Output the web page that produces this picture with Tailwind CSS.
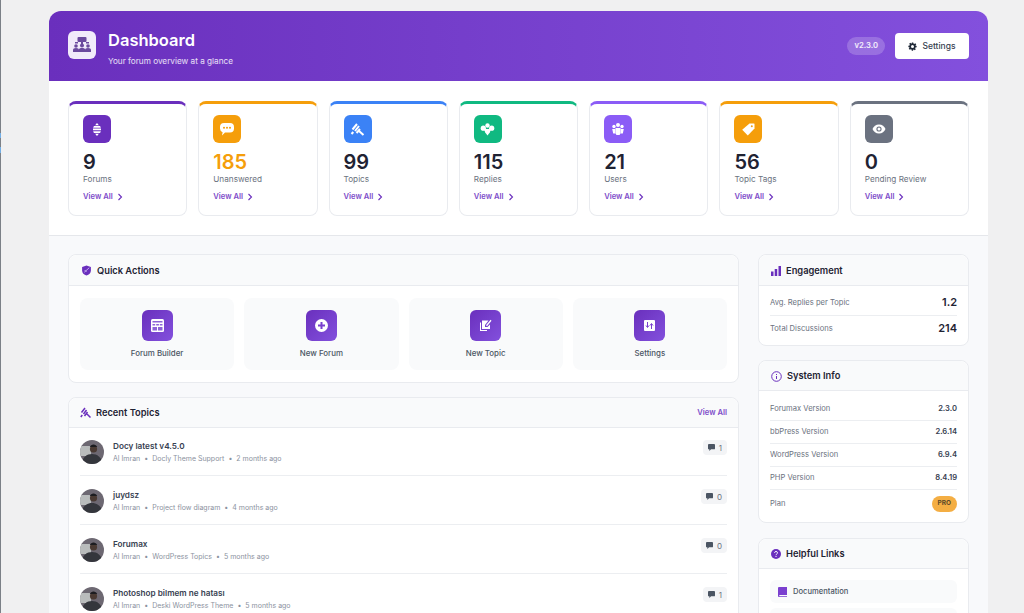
<!DOCTYPE html>
<html lang="en">
<head>
    <meta charset="UTF-8">
    <meta name="viewport" content="width=device-width, initial-scale=1.0">
    <title>Forumax Dashboard</title>
    <script src="https://cdn.jsdelivr.net/npm/@tailwindcss/browser@4"></script>
</head>
<body class="h-[613px] overflow-hidden bg-[#f0f0f1] font-['Inter',sans-serif] text-[#1f2937]">
    <div class="flex h-[613px]">
        <!-- admin menu edge -->
        <div class="w-px shrink-0 bg-[#7b8087] pt-[133px]">
            <div class="h-[5px] bg-[#72aee6]"></div>
            <div class="mt-[9px] h-[6px] bg-[#72aee6]"></div>
        </div>
        <div class="ml-[48px] mt-[11px] w-[939px] shrink-0 overflow-hidden rounded-t-xl bg-[#f8f9fb]">

            <!-- Header -->
            <header class="flex h-[70px] items-start justify-between bg-gradient-to-r from-[#6a2fbd] to-[#8350dd] px-[19px] pt-[20px]">
                <div class="flex items-start gap-[12px]">
                    <div class="flex h-[28px] w-[28px] items-center justify-center rounded-md bg-[#f1ebfa]">
                        <svg class="h-[20px] w-[20px]" viewBox="0 0 20 20" fill="#6b4a9e">
                            <rect x="5.500" y="2" width="9" height="5" rx="1"/>
                            <path d="M3 7h3v1.500H3zM14 7h3v1.500h-3zM9 7h2v2H9z"/>
                            <circle cx="4" cy="11" r="1.800"/><circle cx="10" cy="10.500" r="2"/><circle cx="16" cy="11" r="1.800"/>
                            <path d="M1 17v-2c0-1.200 1-2 3-2s3 .8 3 2v2zM7 17v-2.500c0-1 1-1.500 3-1.500s3 .5 3 1.500V17zM13 17v-2c0-1.200 1-2 3-2s3 .8 3 2v2z"/>
                        </svg>
                    </div>
                    <div>
                        <h1 class="text-[16.500px] leading-[18px] font-semibold text-white">Dashboard</h1>
                        <p class="mt-[6px] text-[8.200px] leading-[12px] text-white/85">Your forum overview at a glance</p>
                    </div>
                </div>
                <div class="mt-[2px] flex items-center gap-[10px]">
                    <span class="flex h-[18px] items-center rounded-full bg-white/20 px-[7px] text-[7.700px] font-semibold text-white/90">v2.3.0</span>
                    <a class="flex h-[26px] w-[74px] items-center justify-center gap-[5px] rounded-[4px] bg-white text-[8.500px] font-medium text-[#374151]">
                        <svg class="h-[9px] w-[9px]" viewBox="0 0 24 24" fill="#1f2937"><path fill-rule="evenodd" d="M10 1h4l.6 3.200 1.900.8 2.700-1.800 2.800 2.800-1.800 2.700.8 1.900L23 10v4l-3.200.6-.8 1.900 1.800 2.700-2.800 2.800-2.700-1.800-1.900.8L14 23h-4l-.6-3.200-1.900-.8-2.700 1.800-2.800-2.800 1.800-2.700-.8-1.900L1 14v-4l3.200-.6.8-1.900-1.800-2.700 2.800-2.800 2.700 1.800 1.900-.8zM12 8a4 4 0 100 8 4 4 0 000-8z"/></svg>
                        Settings
                    </a>
                </div>
            </header>

            <!-- Stat cards -->
            <section class="grid h-[155px] grid-cols-7 gap-[11px] border-b border-[#e5e7eb] bg-white px-[19px] pt-[20px]">
                <div class="h-[115px] rounded-lg border border-t-[3px] border-[#e9ebef] border-t-[#6a2fbd] bg-white px-[14px] pt-[11px]">
                    <div class="flex h-[28px] w-[28px] items-center justify-center rounded-md bg-[#6a2fbd]">
                        <svg class="h-[13px] w-[10px]" viewBox="0 0 12 12" preserveAspectRatio="none" fill="#fff"><path d="M6 0l2.300 2H3.700zM2.300 2.700h7.400L10.600 4.400H1.400zM1.200 5.100h9.600v1.700H1.200zM1.400 7.500h9.200L9.700 9.200H2.300zM3.700 9.900h4.600L6 12z"/></svg>
                    </div>
                    <div class="mt-[8px] text-[20px] leading-[23px] font-semibold text-[#1f2333]">9</div>
                    <div class="text-[8.200px] leading-[11px] text-[#6b7280]">Forums</div>
                    <a class="mt-[6px] flex items-center gap-[4px] text-[7.600px] leading-[11px] font-semibold text-[#7c4bc9]">View All
                        <svg class="h-[8px] w-[6px]" viewBox="0 0 6 8" fill="none" stroke="#6a2fbd" stroke-width="1.100"><path d="M1.500 1l3 3-3 3"/></svg></a>
                </div>
                <div class="h-[115px] rounded-lg border border-t-[3px] border-[#e9ebef] border-t-[#f59e0b] bg-white px-[14px] pt-[11px]">
                    <div class="flex h-[28px] w-[28px] items-center justify-center rounded-md bg-[#f59e0b]">
                        <svg class="h-[16px] w-[16px]" viewBox="0 0 16 16"><path fill="#fff" d="M5 2h6a4 4 0 014 4v1.500a4 4 0 01-4 4H6L3 14.500l.6-3.300A4 4 0 011 7.500V6a4 4 0 014-4z"/><circle cx="5" cy="6.800" r="1" fill="#f59e0b"/><circle cx="8" cy="6.800" r="1" fill="#f59e0b"/><circle cx="11" cy="6.800" r="1" fill="#f59e0b"/></svg>
                    </div>
                    <div class="mt-[8px] text-[20px] leading-[23px] font-semibold text-[#f59e0b]">185</div>
                    <div class="text-[8.200px] leading-[11px] text-[#6b7280]">Unanswered</div>
                    <a class="mt-[6px] flex items-center gap-[4px] text-[7.600px] leading-[11px] font-semibold text-[#7c4bc9]">View All
                        <svg class="h-[8px] w-[6px]" viewBox="0 0 6 8" fill="none" stroke="#6a2fbd" stroke-width="1.100"><path d="M1.500 1l3 3-3 3"/></svg></a>
                </div>
                <div class="h-[115px] rounded-lg border border-t-[3px] border-[#e9ebef] border-t-[#3b82f6] bg-white px-[14px] pt-[11px]">
                    <div class="flex h-[28px] w-[28px] items-center justify-center rounded-md bg-[#3b82f6]">
                        <svg class="h-[15px] w-[15px]" viewBox="0 0 15 15" fill="none" stroke="#fff" stroke-width="2"><path d="M2.500 7.500l4.500-5.500M5 9l4-5M1.500 12l1.800-2M6.500 11l3.500-4M9 9l4.500 4"/></svg>
                    </div>
                    <div class="mt-[8px] text-[20px] leading-[23px] font-semibold text-[#1f2333]">99</div>
                    <div class="text-[8.200px] leading-[11px] text-[#6b7280]">Topics</div>
                    <a class="mt-[6px] flex items-center gap-[4px] text-[7.600px] leading-[11px] font-semibold text-[#7c4bc9]">View All
                        <svg class="h-[8px] w-[6px]" viewBox="0 0 6 8" fill="none" stroke="#6a2fbd" stroke-width="1.100"><path d="M1.500 1l3 3-3 3"/></svg></a>
                </div>
                <div class="h-[115px] rounded-lg border border-t-[3px] border-[#e9ebef] border-t-[#10b981] bg-white px-[14px] pt-[11px]">
                    <div class="flex h-[28px] w-[28px] items-center justify-center rounded-md bg-[#10b981]">
                        <svg class="h-[15px] w-[15px]" viewBox="0 0 15 15" fill="#fff"><circle cx="7.500" cy="3.500" r="2.200"/><circle cx="3.300" cy="6.200" r="2.600"/><circle cx="11.700" cy="6.200" r="2.600"/><path d="M4 7h7l-1.200 3.500L7.500 13.500 5.200 10.500z"/></svg>
                    </div>
                    <div class="mt-[8px] text-[20px] leading-[23px] font-semibold text-[#1f2333]">115</div>
                    <div class="text-[8.200px] leading-[11px] text-[#6b7280]">Replies</div>
                    <a class="mt-[6px] flex items-center gap-[4px] text-[7.600px] leading-[11px] font-semibold text-[#7c4bc9]">View All
                        <svg class="h-[8px] w-[6px]" viewBox="0 0 6 8" fill="none" stroke="#6a2fbd" stroke-width="1.100"><path d="M1.500 1l3 3-3 3"/></svg></a>
                </div>
                <div class="h-[115px] rounded-lg border border-t-[3px] border-[#e9ebef] border-t-[#8b5cf6] bg-white px-[14px] pt-[11px]">
                    <div class="flex h-[28px] w-[28px] items-center justify-center rounded-md bg-[#8b5cf6]">
                        <svg class="h-[14px] w-[14px]" viewBox="0 0 14 14" fill="#fff"><circle cx="3" cy="4.500" r="1.700"/><circle cx="7" cy="3" r="2"/><circle cx="11" cy="4.500" r="1.700"/><path d="M1.200 7h3v4.500h-2zM9.800 7h3l-1 4.500h-2zM4.500 6h5v5.500L8.500 13h-3l-1-1.500z"/></svg>
                    </div>
                    <div class="mt-[8px] text-[20px] leading-[23px] font-semibold text-[#1f2333]">21</div>
                    <div class="text-[8.200px] leading-[11px] text-[#6b7280]">Users</div>
                    <a class="mt-[6px] flex items-center gap-[4px] text-[7.600px] leading-[11px] font-semibold text-[#7c4bc9]">View All
                        <svg class="h-[8px] w-[6px]" viewBox="0 0 6 8" fill="none" stroke="#6a2fbd" stroke-width="1.100"><path d="M1.500 1l3 3-3 3"/></svg></a>
                </div>
                <div class="h-[115px] rounded-lg border border-t-[3px] border-[#e9ebef] border-t-[#f59e0b] bg-white px-[14px] pt-[11px]">
                    <div class="flex h-[28px] w-[28px] items-center justify-center rounded-md bg-[#f59e0b]">
                        <svg class="h-[15px] w-[15px]" viewBox="0 0 15 15"><path fill="#fff" d="M8.500 1.500H13a.5.5 0 01.5.5v4.500L6.800 13.500 1.200 7.800z"/><circle cx="10.800" cy="4.200" r="1" fill="#f59e0b"/></svg>
                    </div>
                    <div class="mt-[8px] text-[20px] leading-[23px] font-semibold text-[#1f2333]">56</div>
                    <div class="text-[8.200px] leading-[11px] text-[#6b7280]">Topic Tags</div>
                    <a class="mt-[6px] flex items-center gap-[4px] text-[7.600px] leading-[11px] font-semibold text-[#7c4bc9]">View All
                        <svg class="h-[8px] w-[6px]" viewBox="0 0 6 8" fill="none" stroke="#6a2fbd" stroke-width="1.100"><path d="M1.500 1l3 3-3 3"/></svg></a>
                </div>
                <div class="h-[115px] rounded-lg border border-t-[3px] border-[#e9ebef] border-t-[#6b7280] bg-white px-[14px] pt-[11px]">
                    <div class="flex h-[28px] w-[28px] items-center justify-center rounded-md bg-[#6b7280]">
                        <svg class="h-[14px] w-[14px]" viewBox="0 0 14 14"><path fill="#fff" d="M7 2.500c3 0 5.500 2 6.500 4.500-1 2.500-3.500 4.500-6.500 4.500S1.500 9.500.5 7c1-2.500 3.500-4.500 6.500-4.500z"/><circle cx="7" cy="7" r="2.600" fill="#6b7280"/><circle cx="7" cy="7" r="1.500" fill="#fff"/></svg>
                    </div>
                    <div class="mt-[8px] text-[20px] leading-[23px] font-semibold text-[#1f2333]">0</div>
                    <div class="text-[8.200px] leading-[11px] text-[#6b7280]">Pending Review</div>
                    <a class="mt-[6px] flex items-center gap-[4px] text-[7.600px] leading-[11px] font-semibold text-[#7c4bc9]">View All
                        <svg class="h-[8px] w-[6px]" viewBox="0 0 6 8" fill="none" stroke="#6a2fbd" stroke-width="1.100"><path d="M1.500 1l3 3-3 3"/></svg></a>
                </div>
            </section>

            <!-- Main columns -->
            <div class="flex gap-[19px] px-[19px] pt-[18px]">
                <div class="w-[671px] shrink-0">
                    <!-- Quick Actions -->
                    <div class="h-[129px] rounded-lg border border-[#e9ebef] bg-white">
                        <div class="flex h-[31px] items-center gap-[5px] rounded-t-lg border-b border-[#e9ebef] bg-[#f9fafb] pt-[1px] pl-[12px] text-[9.300px] font-semibold text-[#1f2333]">
                            <svg class="h-[11px] w-[11px]" viewBox="0 0 12 12"><path fill="#6a2fbd" d="M6 .5l4.800 1.800V6c0 2.800-2 4.600-4.800 5.500C3.200 10.600 1.200 8.800 1.200 6V2.300z"/><path d="M3.500 8L9 3M4 5.500l2 2" stroke="#c9b3ee" stroke-width="1" fill="none"/></svg>
                            Quick Actions
                        </div>
                        <div class="grid grid-cols-4 gap-[10px] px-[11px] pt-[12px]">
                            <a class="flex h-[72px] flex-col items-center rounded-lg bg-[#f9fafb] pt-[12px] text-[7.900px] font-medium text-[#4b5563]">
                                <span class="flex h-[31px] w-[31px] items-center justify-center rounded-md bg-gradient-to-br from-[#6a2fbd] to-[#8350dd]">
                                    <svg class="h-[13px] w-[13px]" viewBox="0 0 13 13"><rect width="13" height="13" rx="1.500" fill="#fff"/><path d="M1.500 2h10v1.500h-10zM1.500 5h2.700v1.500H1.500zM5.200 5h2.700v1.500H5.200zM8.800 5h2.700v1.500H8.800zM1.500 8h4.500v3.500H1.500zM7 8h4.500v3.500H7z" fill="#8d63d8"/></svg>
                                </span>
                                <span class="mt-[7px] leading-[11px]">Forum Builder</span>
                            </a>
                            <a class="flex h-[72px] flex-col items-center rounded-lg bg-[#f9fafb] pt-[12px] text-[7.900px] font-medium text-[#4b5563]">
                                <span class="flex h-[31px] w-[31px] items-center justify-center rounded-md bg-gradient-to-br from-[#6a2fbd] to-[#8350dd]">
                                    <svg class="h-[13px] w-[13px]" viewBox="0 0 13 13"><circle cx="6.500" cy="6.500" r="6.500" fill="#fff"/><path d="M5.500 3h2v2.500H10v2H7.500V10h-2V7.500H3v-2h2.500z" fill="#7a3fcf"/></svg>
                                </span>
                                <span class="mt-[7px] leading-[11px]">New Forum</span>
                            </a>
                            <a class="flex h-[72px] flex-col items-center rounded-lg bg-[#f9fafb] pt-[12px] text-[7.900px] font-medium text-[#4b5563]">
                                <span class="flex h-[31px] w-[31px] items-center justify-center rounded-md bg-gradient-to-br from-[#6a2fbd] to-[#8350dd]">
                                    <svg class="h-[13px] w-[13px]" viewBox="0 0 13 13" fill="#fff"><path d="M1 3.500h1v7.500h6v1H1z"/><path d="M3 1.500h6.500L6 6v2h2.500L11 5.500V10H3z"/><path d="M7 6.200L11.500.800l1 .9L8 7.200z"/></svg>
                                </span>
                                <span class="mt-[7px] leading-[11px]">New Topic</span>
                            </a>
                            <a class="flex h-[72px] flex-col items-center rounded-lg bg-[#f9fafb] pt-[12px] text-[7.900px] font-medium text-[#4b5563]">
                                <span class="flex h-[31px] w-[31px] items-center justify-center rounded-md bg-gradient-to-br from-[#6a2fbd] to-[#8350dd]">
                                    <svg class="h-[11px] w-[11px]" viewBox="0 0 11 11"><rect width="11" height="11" rx="1" fill="#fff"/><path d="M3.500 2v5M2 5.500l1.500 2 1.500-2M7.500 9V4M6 5.500l1.500-2 1.500 2" fill="none" stroke="#7a3fcf"/></svg>
                                </span>
                                <span class="mt-[7px] leading-[11px]">Settings</span>
                            </a>
                        </div>
                    </div>

                    <!-- Recent Topics -->
                    <div class="mt-[14px] rounded-t-lg border border-[#e9ebef] bg-white">
                        <div class="flex h-[30px] items-center justify-between rounded-t-lg border-b border-[#e9ebef] bg-[#f9fafb] px-[11px] text-[9.300px] font-semibold text-[#1f2333]">
                            <span class="flex items-center gap-[5px]">
                                <svg class="h-[11px] w-[11px]" viewBox="0 0 11 11" fill="none" stroke="#6a2fbd" stroke-width="1.500"><path d="M1.500 5.500l3.500-4.500M3.500 7l3-4M.8 10l1.500-2M4.500 9l3-4M7 7l3.500 3.500"/></svg>
                                Recent Topics
                            </span>
                            <a class="text-[7.600px] font-semibold text-[#7c4bc9]">View All</a>
                        </div>
                        <div class="px-[11px]">
                            <!-- row -->
                            <div class="flex h-[48px] items-start justify-between border-b border-[#eceef1] pt-[12px]">
                                <div class="flex items-start gap-[9px]">
                                    <svg class="h-[24px] w-[24px] shrink-0 rounded-full" viewBox="0 0 24 24"><rect width="24" height="24" fill="#6d6872"/><path d="M0 6h11v10H0z" fill="#b9bcbc"/><path d="M2 24c0-7 5-10 10-10s10 3 10 10z" fill="#34363c"/><circle cx="13.500" cy="9" r="3.600" fill="#4a3a33"/><path d="M9.800 7c1-3.400 6.400-3.400 7.400 0z" fill="#1c1c20"/></svg>
                                    <div class="pt-[1px]">
                                        <div class="text-[8.200px] leading-[11px] font-semibold text-[#374151]">Docy latest v4.5.0</div>
                                        <div class="mt-[2px] flex items-center gap-[4px] text-[7px] leading-[10px] text-[#8b92a0]"><span>Al Imran</span><span>•</span><span>Docly Theme Support</span><span>•</span><span>2 months ago</span></div>
                                    </div>
                                </div>
                                <span class="flex h-[15px] items-center gap-[4px] rounded-[4px] bg-[#f3f4f6] px-[5px] text-[8px] text-[#6b7280]"><svg class="h-[7px] w-[7px]" viewBox="0 0 8 8" fill="#4b5563"><path d="M1 0h6a1 1 0 011 1v4a1 1 0 01-1 1H3.500L1.500 8V6H1a1 1 0 01-1-1V1a1 1 0 011-1z"/></svg>1</span>
                            </div>
                            <div class="flex h-[49px] items-start justify-between border-b border-[#eceef1] pt-[13px]">
                                <div class="flex items-start gap-[9px]">
                                    <svg class="h-[24px] w-[24px] shrink-0 rounded-full" viewBox="0 0 24 24"><rect width="24" height="24" fill="#6d6872"/><path d="M0 6h11v10H0z" fill="#b9bcbc"/><path d="M2 24c0-7 5-10 10-10s10 3 10 10z" fill="#34363c"/><circle cx="13.500" cy="9" r="3.600" fill="#4a3a33"/><path d="M9.800 7c1-3.400 6.400-3.400 7.400 0z" fill="#1c1c20"/></svg>
                                    <div class="pt-[1px]">
                                        <div class="text-[8.200px] leading-[11px] font-semibold text-[#374151]">juydsz</div>
                                        <div class="mt-[2px] flex items-center gap-[4px] text-[7px] leading-[10px] text-[#8b92a0]"><span>Al Imran</span><span>•</span><span>Project flow diagram</span><span>•</span><span>4 months ago</span></div>
                                    </div>
                                </div>
                                <span class="flex h-[15px] items-center gap-[4px] rounded-[4px] bg-[#f3f4f6] px-[5px] text-[8px] text-[#6b7280]"><svg class="h-[7px] w-[7px]" viewBox="0 0 8 8" fill="#4b5563"><path d="M1 0h6a1 1 0 011 1v4a1 1 0 01-1 1H3.500L1.500 8V6H1a1 1 0 01-1-1V1a1 1 0 011-1z"/></svg>0</span>
                            </div>
                            <div class="flex h-[49px] items-start justify-between border-b border-[#eceef1] pt-[13px]">
                                <div class="flex items-start gap-[9px]">
                                    <svg class="h-[24px] w-[24px] shrink-0 rounded-full" viewBox="0 0 24 24"><rect width="24" height="24" fill="#6d6872"/><path d="M0 6h11v10H0z" fill="#b9bcbc"/><path d="M2 24c0-7 5-10 10-10s10 3 10 10z" fill="#34363c"/><circle cx="13.500" cy="9" r="3.600" fill="#4a3a33"/><path d="M9.800 7c1-3.400 6.400-3.400 7.400 0z" fill="#1c1c20"/></svg>
                                    <div class="pt-[1px]">
                                        <div class="text-[8.200px] leading-[11px] font-semibold text-[#374151]">Forumax</div>
                                        <div class="mt-[2px] flex items-center gap-[4px] text-[7px] leading-[10px] text-[#8b92a0]"><span>Al Imran</span><span>•</span><span>WordPress Topics</span><span>•</span><span>5 months ago</span></div>
                                    </div>
                                </div>
                                <span class="flex h-[15px] items-center gap-[4px] rounded-[4px] bg-[#f3f4f6] px-[5px] text-[8px] text-[#6b7280]"><svg class="h-[7px] w-[7px]" viewBox="0 0 8 8" fill="#4b5563"><path d="M1 0h6a1 1 0 011 1v4a1 1 0 01-1 1H3.500L1.500 8V6H1a1 1 0 01-1-1V1a1 1 0 011-1z"/></svg>0</span>
                            </div>
                            <div class="flex h-[49px] items-start justify-between pt-[13px]">
                                <div class="flex items-start gap-[9px]">
                                    <svg class="h-[24px] w-[24px] shrink-0 rounded-full" viewBox="0 0 24 24"><rect width="24" height="24" fill="#6d6872"/><path d="M0 6h11v10H0z" fill="#b9bcbc"/><path d="M2 24c0-7 5-10 10-10s10 3 10 10z" fill="#34363c"/><circle cx="13.500" cy="9" r="3.600" fill="#4a3a33"/><path d="M9.800 7c1-3.400 6.400-3.400 7.400 0z" fill="#1c1c20"/></svg>
                                    <div class="pt-[1px]">
                                        <div class="text-[8.200px] leading-[11px] font-semibold text-[#374151]">Photoshop bilmem ne hatası</div>
                                        <div class="mt-[2px] flex items-center gap-[4px] text-[7px] leading-[10px] text-[#8b92a0]"><span>Al Imran</span><span>•</span><span>Deski WordPress Theme</span><span>•</span><span>5 months ago</span></div>
                                    </div>
                                </div>
                                <span class="flex h-[15px] items-center gap-[4px] rounded-[4px] bg-[#f3f4f6] px-[5px] text-[8px] text-[#6b7280]"><svg class="h-[7px] w-[7px]" viewBox="0 0 8 8" fill="#4b5563"><path d="M1 0h6a1 1 0 011 1v4a1 1 0 01-1 1H3.500L1.500 8V6H1a1 1 0 01-1-1V1a1 1 0 011-1z"/></svg>1</span>
                            </div>
                        </div>
                    </div>
                </div>

                <!-- Sidebar -->
                <aside class="w-[211px] shrink-0">
                    <div class="h-[92px] rounded-lg border border-[#e9ebef] bg-white">
                        <div class="flex h-[31px] items-center gap-[5px] rounded-t-lg border-b border-[#e9ebef] bg-[#f9fafb] pt-[1px] pl-[12px] text-[9.300px] font-semibold text-[#1f2333]">
                            <svg class="h-[10px] w-[10px]" viewBox="0 0 10 10" fill="#6a2fbd"><path d="M0 5.500h2.500V10H0zM3.700 3h2.500v7H3.700zM7.500 0H10v10H7.500z"/></svg>
                            Engagement
                        </div>
                        <div class="px-[11px] pt-[1px]">
                            <div class="flex h-[29px] items-center justify-between border-b border-[#eceef1] pt-[3px] text-[7.600px] text-[#6b7280]"><span>Avg. Replies per Topic</span><span class="text-[11px] font-semibold text-[#1f2333]">1.2</span></div>
                            <div class="flex h-[25px] items-center justify-between text-[7.600px] text-[#6b7280]"><span>Total Discussions</span><span class="text-[11px] font-semibold text-[#1f2333]">214</span></div>
                        </div>
                    </div>
                    <div class="mt-[14px] h-[163px] rounded-lg border border-[#e9ebef] bg-white">
                        <div class="flex h-[30px] items-center gap-[5px] rounded-t-lg border-b border-[#e9ebef] bg-[#f9fafb] pt-[1px] pl-[12px] text-[9.300px] font-semibold text-[#1f2333]">
                            <svg class="h-[11px] w-[11px]" viewBox="0 0 11 11" fill="none" stroke="#6a2fbd"><circle cx="5.500" cy="5.500" r="4.800"/><path d="M5.500 5v3M5.500 3v1"/></svg>
                            System Info
                        </div>
                        <div class="px-[11px] pt-[7px] text-[7.600px] text-[#6b7280]">
                            <div class="flex h-[23px] items-center justify-between border-b border-[#eceef1]"><span>Forumax Version</span><span class="font-semibold text-[#374151]">2.3.0</span></div>
                            <div class="flex h-[23px] items-center justify-between border-b border-[#eceef1]"><span>bbPress Version</span><span class="font-semibold text-[#374151]">2.6.14</span></div>
                            <div class="flex h-[23px] items-center justify-between border-b border-[#eceef1]"><span>WordPress Version</span><span class="font-semibold text-[#374151]">6.9.4</span></div>
                            <div class="flex h-[23px] items-center justify-between border-b border-[#eceef1]"><span>PHP Version</span><span class="font-semibold text-[#374151]">8.4.19</span></div>
                            <div class="flex h-[28px] items-center justify-between"><span>Plan</span><span class="flex h-[16px] items-center rounded-full bg-[#f4ae43] px-[6px] text-[6.500px] font-bold text-[#5c4a2a]">PRO</span></div>
                        </div>
                    </div>
                    <div class="mt-[15px] rounded-t-lg border border-[#e9ebef] bg-white">
                        <div class="flex h-[30px] items-center gap-[5px] rounded-t-lg border-b border-[#e9ebef] bg-[#f9fafb] pl-[12px] text-[9.300px] font-semibold text-[#1f2333]">
                            <svg class="h-[10px] w-[10px]" viewBox="0 0 10 10"><circle cx="5" cy="5" r="5" fill="#6a2fbd"/><path d="M3.500 3.800C3.700 2 6.500 2 6.500 3.800c0 1.200-1.500 1.200-1.500 2.400M5 7v1" fill="none" stroke="#fff"/></svg>
                            Helpful Links
                        </div>
                        <div class="px-[11px] pt-[11px] pb-[5px]">
                            <a class="flex h-[23px] items-center gap-[6px] rounded-md bg-[#f9fafb] pl-[8px] text-[7.600px] font-medium text-[#4b5563]">
                                <svg class="h-[10px] w-[9px]" viewBox="0 0 9 10" fill="#7a3fcf"><path d="M1 0h8v8H1.500a.8.8 0 000 1.200H9V10H1a1 1 0 01-1-1V1a1 1 0 011-1z"/></svg>
                                Documentation
                            </a>
                            <div class="mt-[5px] h-[23px] rounded-md bg-[#f9fafb]"></div>
                        </div>
                    </div>
                </aside>
            </div>
        </div>
    </div>
</body>
</html>
